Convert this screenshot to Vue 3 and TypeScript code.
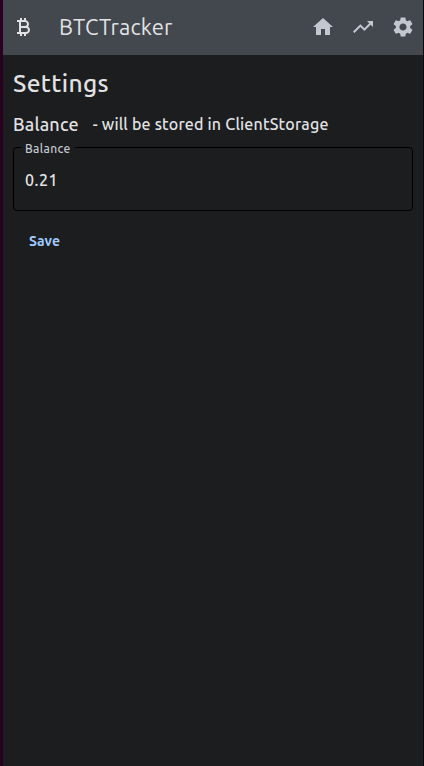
<script setup lang="ts">
import { ref } from 'vue'

const title = 'BTCTracker'
const balance = ref('0.21')
const navigation = [
  { label: 'Home', path: 'M10 20v-6h4v6h5v-8h3L12 3 2 12h3v8z' },
  { label: 'Trends', path: 'M16 6l2.29 2.29-4.88 4.88-4-4L2 16.59 3.41 18l6-6 4 4 6.3-6.29L22 12V6z' },
  {
    label: 'Settings',
    path: 'M19.14 12.94c.04-.3.06-.61.06-.94 0-.32-.02-.64-.07-.94l2.03-1.58c.18-.14.23-.41.12-.61l-1.92-3.32c-.12-.22-.37-.29-.59-.22l-2.39.96c-.5-.38-1.03-.7-1.62-.94l-.36-2.54c-.04-.24-.24-.41-.48-.41h-3.84c-.24 0-.43.17-.47.41l-.36 2.54c-.59.24-1.13.57-1.62.94l-2.39-.96c-.22-.08-.47 0-.59.22L2.74 8.87c-.12.21-.08.47.12.61l2.03 1.58c-.05.3-.09.63-.09.94s.02.64.07.94l-2.03 1.58c-.18.14-.23.41-.12.61l1.92 3.32c.12.22.37.29.59.22l2.39-.96c.5.38 1.03.7 1.62.94l.36 2.54c.05.24.24.41.48.41h3.84c.24 0 .44-.17.47-.41l.36-2.54c.59-.24 1.13-.56 1.62-.94l2.39.96c.22.08.47 0 .59-.22l1.92-3.32c.12-.22.07-.47-.12-.61l-2.01-1.58zM12 15.6c-1.98 0-3.6-1.62-3.6-3.6s1.62-3.6 3.6-3.6 3.6 1.62 3.6 3.6-1.62 3.6-3.6 3.6z',
  },
]
</script>

<template>
  <div class="app">
    <header class="toolbar">
      <svg class="icon logo" viewBox="0 0 24 24"><path d="M17.06 11.57c.59-.69.94-1.59.94-2.57 0-1.86-1.27-3.43-3-3.87V3h-2v2h-2V3H9v2H6v2h2v10H6v2h3v2h2v-2h2v2h2v-2c2.21 0 4-1.79 4-4 0-1.45-.78-2.73-1.94-3.43zM10 7h4c1.1 0 2 .9 2 2s-.9 2-2 2h-4V7zm5 10h-5v-4h5c1.1 0 2 .9 2 2s-.9 2-2 2z" /></svg>
      <span class="title">{{ title }}</span>
      <nav class="nav">
        <svg v-for="item in navigation" :key="item.label" class="icon" viewBox="0 0 24 24"><path :d="item.path" /></svg>
      </nav>
    </header>
    <main class="content">
      <h1 class="heading">Settings</h1>
      <div class="section">
        <span class="name">Balance</span>
        <span class="hint">- will be stored in ClientStorage</span>
      </div>
      <fieldset class="field">
        <legend class="legend"><span class="label">Balance</span></legend>
        <input v-model="balance" class="input" />
      </fieldset>
      <button class="save"><span class="save-text">Save</span></button>
    </main>
  </div>
</template>

<style>
body {
  background: #1c1e1f;
}
</style>

<style scoped>
.app {
  box-sizing: border-box;
  height: 766px;
  border-left: 3px solid #29001f;
  border-right: 1px solid #0d080d;
  background: #1b1d1e;
  color: #e2e2e5;
  font-family: Ubuntu, "Noto Sans", sans-serif;
  white-space: nowrap;
  overflow: hidden;
}
.toolbar {
  box-sizing: border-box;
  height: 55px;
  padding: 0 8px 1px 8px;
  display: flex;
  align-items: center;
  background: #43474e;
}
.icon {
  display: block;
  width: 24px;
  height: 24px;
  fill: #c3c7cf;
}
.logo {
  fill: #e2e2e5;
}
.title {
  margin-left: 24px;
  font-size: 22px;
  font-weight: 450;
  line-height: 28px;
  letter-spacing: 0.12px;
}
.nav {
  display: flex;
  gap: 16px;
  margin-left: auto;
}
.content {
  padding: 12px 10px;
}
.heading {
  margin: 0;
  font-size: 24.5px;
  font-weight: 500;
  line-height: 32px;
  letter-spacing: 0.38px;
}
.section {
  display: flex;
  align-items: flex-start;
  gap: 14px;
  margin-top: 11px;
  height: 29px;
  line-height: 29px;
}
.name {
  font-size: 18px;
  font-weight: 500;
  letter-spacing: 0.15px;
}
.hint {
  font-size: 16px;
  font-weight: 500;
  line-height: 28px;
  letter-spacing: 0.19px;
}
.field {
  box-sizing: border-box;
  height: 72px;
  margin: 0;
  min-width: 0;
  padding: 0 11px;
  border: 1px solid #000;
  border-radius: 4px;
}
.legend {
  height: 16px;
  padding: 0 4px;
  margin-left: -4px;
  line-height: 19px;
  font-size: 12px;
  font-weight: 500;
  letter-spacing: 0.35px;
  color: #c3c7cf;
}
.input {
  display: block;
  width: 100%;
  height: 24px;
  margin-top: 13px;
  padding: 0;
  border: 0;
  outline: 0;
  background: transparent;
  color: #e2e2e5;
  font: 500 16px/24px Ubuntu, "Noto Sans", sans-serif;
  letter-spacing: 0.5px;
}
.save {
  display: block;
  height: 40px;
  margin-top: 10px;
  padding: 0 16px;
  border: 0;
  background: transparent;
  color: #9fcaff;
  font: 600 14px/20px Ubuntu, "Noto Sans", sans-serif;
}
</style>
